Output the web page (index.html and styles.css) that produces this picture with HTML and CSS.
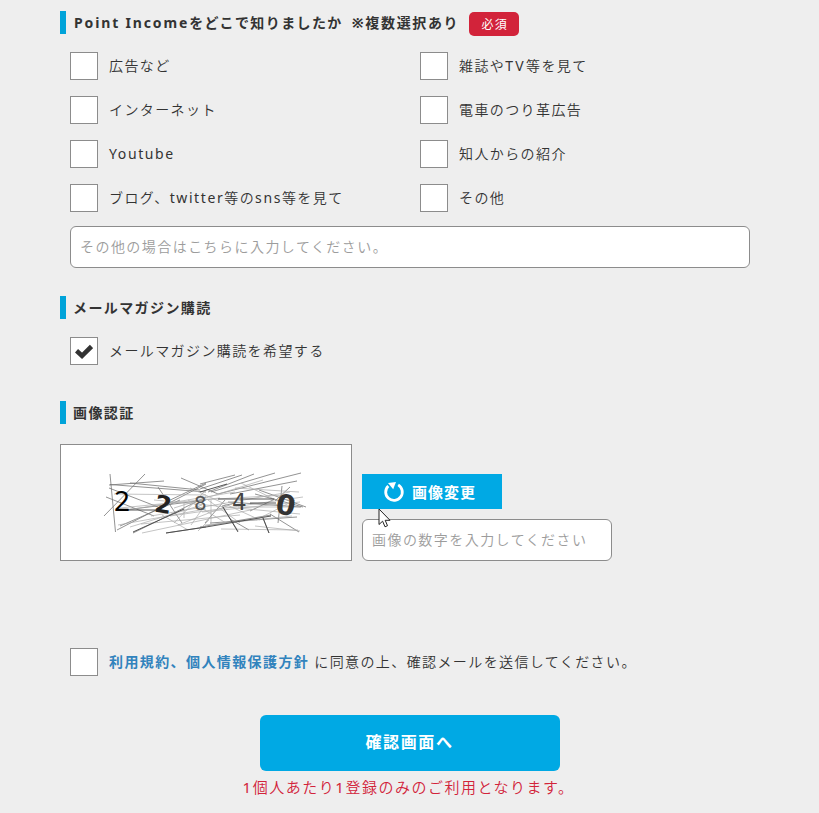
FILE: index.html
```html
<!DOCTYPE html>
<html lang="ja">
<head>
<meta charset="utf-8">
<title>Point Income</title>
<link rel="stylesheet" href="styles.css">
</head>
<body>
<form class="form">
  <section class="section survey">
    <h2 class="heading"><span class="heading-latin">Point Income</span>をどこで知りましたか <span class="note">※複数選択あり</span><span class="required">必須</span></h2>
    <div class="options">
      <label class="option"><input type="checkbox" class="check"><span>広告など</span></label>
      <label class="option"><input type="checkbox" class="check"><span>雑誌や<span class="latin caps">TV</span>等を見て</span></label>
      <label class="option"><input type="checkbox" class="check"><span>インターネット</span></label>
      <label class="option"><input type="checkbox" class="check"><span>電車のつり革広告</span></label>
      <label class="option"><input type="checkbox" class="check"><span class="latin">Youtube</span></label>
      <label class="option"><input type="checkbox" class="check"><span>知人からの紹介</span></label>
      <label class="option"><input type="checkbox" class="check"><span>ブログ、<span class="latin">twitter</span>等の<span class="latin">sns</span>等を見て</span></label>
      <label class="option"><input type="checkbox" class="check"><span>その他</span></label>
    </div>
    <input type="text" class="field field-other" placeholder="その他の場合はこちらに入力してください。">
  </section>

  <section class="section magazine">
    <h2 class="heading">メールマガジン購読</h2>
    <label class="option single">
      <span class="check checked"><svg viewBox="0 0 18 16" width="18" height="16"><path d="M1.500 7.800L7 12.800L16.500 3.500" fill="none" stroke="#333" stroke-width="4.600"/></svg></span>
      <span>メールマガジン購読を希望する</span>
    </label>
  </section>

  <section class="section captcha">
    <h2 class="heading">画像認証</h2>
    <div class="captcha-row">
      <div class="captcha-image">
        <svg viewBox="61 445 290 115" width="290" height="115">
          <g class="scribble">
            <path d="M110 474L115.500 532M109 485L164 481M110 484.500L206 492M145 474L104 516M106 497L154 516M124 510L206 500M117 530L206 484M120 526L180 500M133 533L206 497M166 533L206 527M181 478L218 494M164 503L206 483M130 483L200 490M109 488L158 507M158 487L182 523"/>
            <path d="M200 489L242 475M200 484L235 475M208 492L254 474M211 492L275 473M218 494L301 473M230 494L297 481M200 527L271 515M210 523L297 517M235 503L222 506M222 506L238 531M230 519L249 530M263 518L269 533M270 514L299 532M255 494L303 507M282 486L278 523M259 490L306 507M250 511L275 499M228 502L301 507M205 523L225 500M290 487L275 501"/>
          </g>
          <g class="scribble faint">
            <path d="M114 494L206 495M128 510L235 492M142 533L255 509M151 516L290 492M118 525L206 509M141 524L240 515M154 500L300 514M174 508L263 480M174 523L206 490M184 503L184 518M162 515L188 530M170 516L303 497M190 488L260 520M200 500L285 495M202 512L300 502M208 500L240 523M211 524L211 500M178 525L232 504M205 525L292 516M221 529L298 530M235 488L299 492M241 483L280 502M238 507L300 507M256 520L295 500M255 526L300 531M130 527L202 505M120 508L220 498M188 500L226 523M198 531L209 520M191 525L205 505"/>
          </g>
          <g class="scribble dark">
            <path d="M124 510H157M166 533L206 527L271 516M133 532L184 509M223 507L238 532M263 518L269 533M218 499H274M250 503H276M200 492L227 484"/>
          </g>
          <text x="114" y="511" class="digit d1">2</text>
          <text x="155" y="513" class="digit d2" transform="rotate(9 164 504)">2</text>
          <text x="194" y="510" class="digit d3">8</text>
          <text x="232" y="510" class="digit d4">4</text>
          <text x="276" y="515" class="digit d5" transform="rotate(10 286 505)">0</text>
        </svg>
      </div>
      <div class="captcha-controls">
        <button type="button" class="refresh">
          <svg viewBox="0 0 22 22" width="22" height="22"><path d="M15.200 3.900A8.300 8.300 0 1 1 5.300 5" fill="none" stroke="#fff" stroke-width="2.800"/><path d="M5 2L13 1L10.200 8.200Z" fill="#fff"/></svg>
          <span class="refresh-text">画像変更</span>
          <svg class="cursor" viewBox="0 0 13 20" width="13" height="20"><path d="M1 1V16.500L4.600 13.200L7 18.800L9.500 17.700L7.200 12.300H12Z" fill="#fff" stroke="#222" stroke-width="1"/></svg>
        </button>
        <input type="text" class="field field-captcha" placeholder="画像の数字を入力してください">
      </div>
    </div>
  </section>

  <label class="option agree"><input type="checkbox" class="check"><span><a class="terms">利用規約、個人情報保護方針</a> に同意の上、確認メールを送信してください。</span></label>

  <div class="actions">
    <button type="button" class="submit">確認画面へ</button>
    <p class="limit"><span class="latin">1</span>個人あたり<span class="latin">1</span>登録のみのご利用となります。</p>
  </div>
</form>
</body>
</html>
```
FILE: styles.css
```css
* { box-sizing: border-box; }
body {
  margin: 0;
  background: #eee;
  color: #333;
  font-family: "Noto Sans", "Noto Sans CJK JP", sans-serif;
  font-size: 14px;
  font-weight: 350;
  letter-spacing: 1.4px;
  height: 813px;
  overflow: hidden;
}
.form { width: 700px; margin-left: 60px; padding-top: 11px; }
.heading {
  display: flex;
  align-items: center;
  height: 23px;
  margin: 0;
  padding-left: 7px;
  border-left: 6px solid #00a3d9;
  font-size: 14px;
  font-weight: 700;
  line-height: 23px;
  white-space: pre;
}
.heading-latin { margin-left: 1px; letter-spacing: 1.85px; }
.latin { font-weight: 400; letter-spacing: 1.6px; }
.caps { letter-spacing: 2.3px; }
.note { margin-left: 4px; letter-spacing: 1.65px; }
.required {
  width: 50px;
  height: 24px;
  margin: 3px 0 0 10px;
  padding-left: 1px;
  border-radius: 5px;
  background: #d2233a;
  color: #fff;
  font-size: 12px;
  font-weight: 400;
  letter-spacing: 1.2px;
  line-height: 25px;
  text-align: center;
}
.options {
  display: grid;
  grid-template-columns: 350px 350px;
  row-gap: 16px;
  margin: 18px 0 14px 10px;
  width: 700px;
}
.option { display: flex; align-items: center; height: 28px; line-height: 28px; white-space: nowrap; }
.check {
  appearance: none;
  flex: none;
  display: flex;
  align-items: center;
  justify-content: center;
  width: 28px;
  height: 28px;
  margin: 0 11px 0 0;
  border: 1px solid #8c8c8c;
  background: #fff;
}
.field {
  display: block;
  height: 42px;
  padding: 0 9px 2px;
  border: 1px solid #8c8c8c;
  border-radius: 6px;
  background: #fff;
  font: inherit;
  letter-spacing: 1.45px;
}
.field::placeholder { color: #9c9c9c; opacity: 1; }
.field-other { width: 680px; margin-left: 10px; }
.magazine { margin-top: 28px; }
.single { margin: 18px 0 0 10px; }
.captcha { margin-top: 36px; }
.captcha-row { display: flex; align-items: flex-end; gap: 10px; margin-top: 20px; }
.captcha-image { width: 292px; height: 117px; border: 1px solid #8c8c8c; background: #fff; }
.captcha-image svg { display: block; }
.scribble { fill: none; stroke: #777; stroke-width: .8; }
.faint { stroke: #aaa; stroke-width: .7; }
.dark { stroke: #444; stroke-width: .9; }
.digit { font-family: "DejaVu Sans", sans-serif; letter-spacing: 0; font-weight: 400; }
.d1 { font-family: "Noto Sans", sans-serif; font-size: 28px; fill: #000; }
.d2 { font-size: 24px; font-weight: 700; fill: #222; }
.d3 { font-size: 20px; fill: #555; }
.d4 { font-size: 23px; fill: #444; }
.d5 { font-size: 28px; font-weight: 700; fill: #333; }
.captcha-controls { display: flex; flex-direction: column; gap: 10px; }
.refresh {
  position: relative;
  display: flex;
  align-items: center;
  width: 140px;
  height: 35px;
  padding: 0 0 0 21px;
  border: 0;
  background: #00a9e4;
  color: #fff;
  font: 700 15px/35px "Noto Sans", "Noto Sans CJK JP", sans-serif;
  letter-spacing: 1px;
  gap: 7px;
}
.refresh-text { padding-top: 1px; }
.cursor { position: absolute; left: 16px; top: 34px; }
.field-captcha { width: 250px; }
.agree { margin: 87px 0 0 10px; }
.terms { color: #3183bd; font-weight: 700; }
.actions { display: flex; flex-direction: column; align-items: center; margin-top: 39px; }
.submit {
  width: 300px;
  height: 56px;
  padding: 0 1px 2px 0;
  border: 0;
  border-radius: 6px;
  background: #00a9e4;
  color: #fff;
  font: 700 16px/54px "Noto Sans", "Noto Sans CJK JP", sans-serif;
  letter-spacing: 1.6px;
}
.limit { margin: 4px 3px 0 0; color: #d2233a; font-size: 15px; letter-spacing: 1.5px; line-height: 24px; white-space: nowrap; }
```
